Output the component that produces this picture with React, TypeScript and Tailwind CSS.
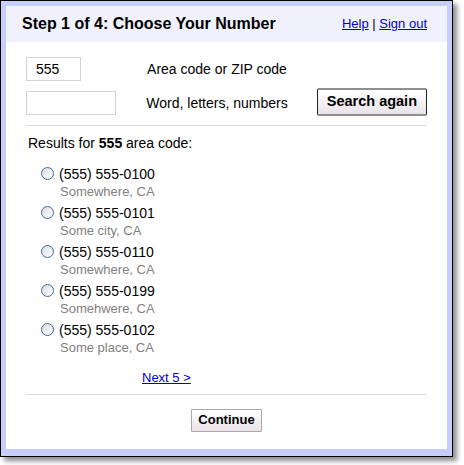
import React from "react";

const numbers = [
  { phone: "(555) 555-0100", place: "Somewhere, CA" },
  { phone: "(555) 555-0101", place: "Some city, CA" },
  { phone: "(555) 555-0110", place: "Somewhere, CA" },
  { phone: "(555) 555-0199", place: "Somehwere, CA" },
  { phone: "(555) 555-0102", place: "Some place, CA" },
];

function Radio() {
  return (
    <span className="mt-[1px] block h-[13px] w-[13px] shrink-0 rounded-full border border-[#3f6aa0] bg-gradient-to-br from-[#dcdcdc] to-white" />
  );
}

export default function App() {
  return (
    <div className="h-[465px] w-[464px] bg-white font-['Liberation_Sans',Arial,sans-serif] text-black">
      <div className="h-[457px] w-[453px] border border-black bg-[#c4d0fb] p-[5px] pb-[7px] shadow-[4px_4px_5px_rgba(0,0,0,0.45)]">
        <div className="flex h-full flex-col bg-white">
          <div className="flex h-[36px] items-center justify-between bg-[#f1f1fe] pl-[16px] pr-[20px]">
            <h1 className="text-[16px] font-bold">Step 1 of 4: Choose Your Number</h1>
            <div className="text-[13px]">
              <a href="#" className="text-[#0000cc] underline">Help</a> |{" "}
              <a href="#" className="text-[#0000cc] underline">Sign out</a>
            </div>
          </div>

          <div className="px-[20px]">
            <div className="mt-[15px] flex h-[24px] items-center">
              <div className="w-[100px]">
                <div className="flex h-[24px] w-[55px] items-center border border-[#d4d4d4] pl-[9px] text-[14px]">555</div>
              </div>
              <div className="w-[182px] text-center text-[14px]">Area code or ZIP code</div>
            </div>
            <div className="mt-[10px] flex h-[24px] items-center">
              <div className="w-[100px]">
                <div className="h-[24px] w-[90px] border border-[#d4d4d4]" />
              </div>
              <div className="w-[182px] text-center text-[14px]">Word, letters, numbers</div>
              <button className="ml-auto h-[27px] -translate-y-[1.5px] rounded-[1px] border border-[#222] bg-gradient-to-b from-white to-[#e8e2e8] px-[9px] text-[14.5px] font-bold">
                Search again
              </button>
            </div>

            <div className="mt-[10px] h-px bg-[#dcdcdc]" />

            <p className="mt-[7px] pl-[2px] text-[14px]">
              Results for <b>555</b> area code:
            </p>

            <ul className="mt-[12px] flex flex-col gap-[5px] pl-[15px]">
              {numbers.map((n) => (
                <li key={n.phone} className="flex gap-[5px]">
                  <Radio />
                  <div className="leading-[17px]">
                    <div className="text-[14px]">{n.phone}</div>
                    <div className="pl-[1px] text-[13px] text-[#808080]">{n.place}</div>
                  </div>
                </li>
              ))}
            </ul>

            <div className="mt-[12px] pl-[116px] text-[13px]">
              <a href="#" className="text-[#0000cc] underline">Next 5 &gt;</a>
            </div>

            <div className="mt-[6px] h-px bg-[#dcdcdc]" />

            <div className="mt-[14px] flex justify-center">
              <button className="h-[23px] rounded-[1px] border border-[#a8a8a8] bg-gradient-to-b from-white to-[#e8e2e8] px-[6px] text-[13px] font-bold">
                Continue
              </button>
            </div>
          </div>
        </div>
      </div>
    </div>
  );
}
